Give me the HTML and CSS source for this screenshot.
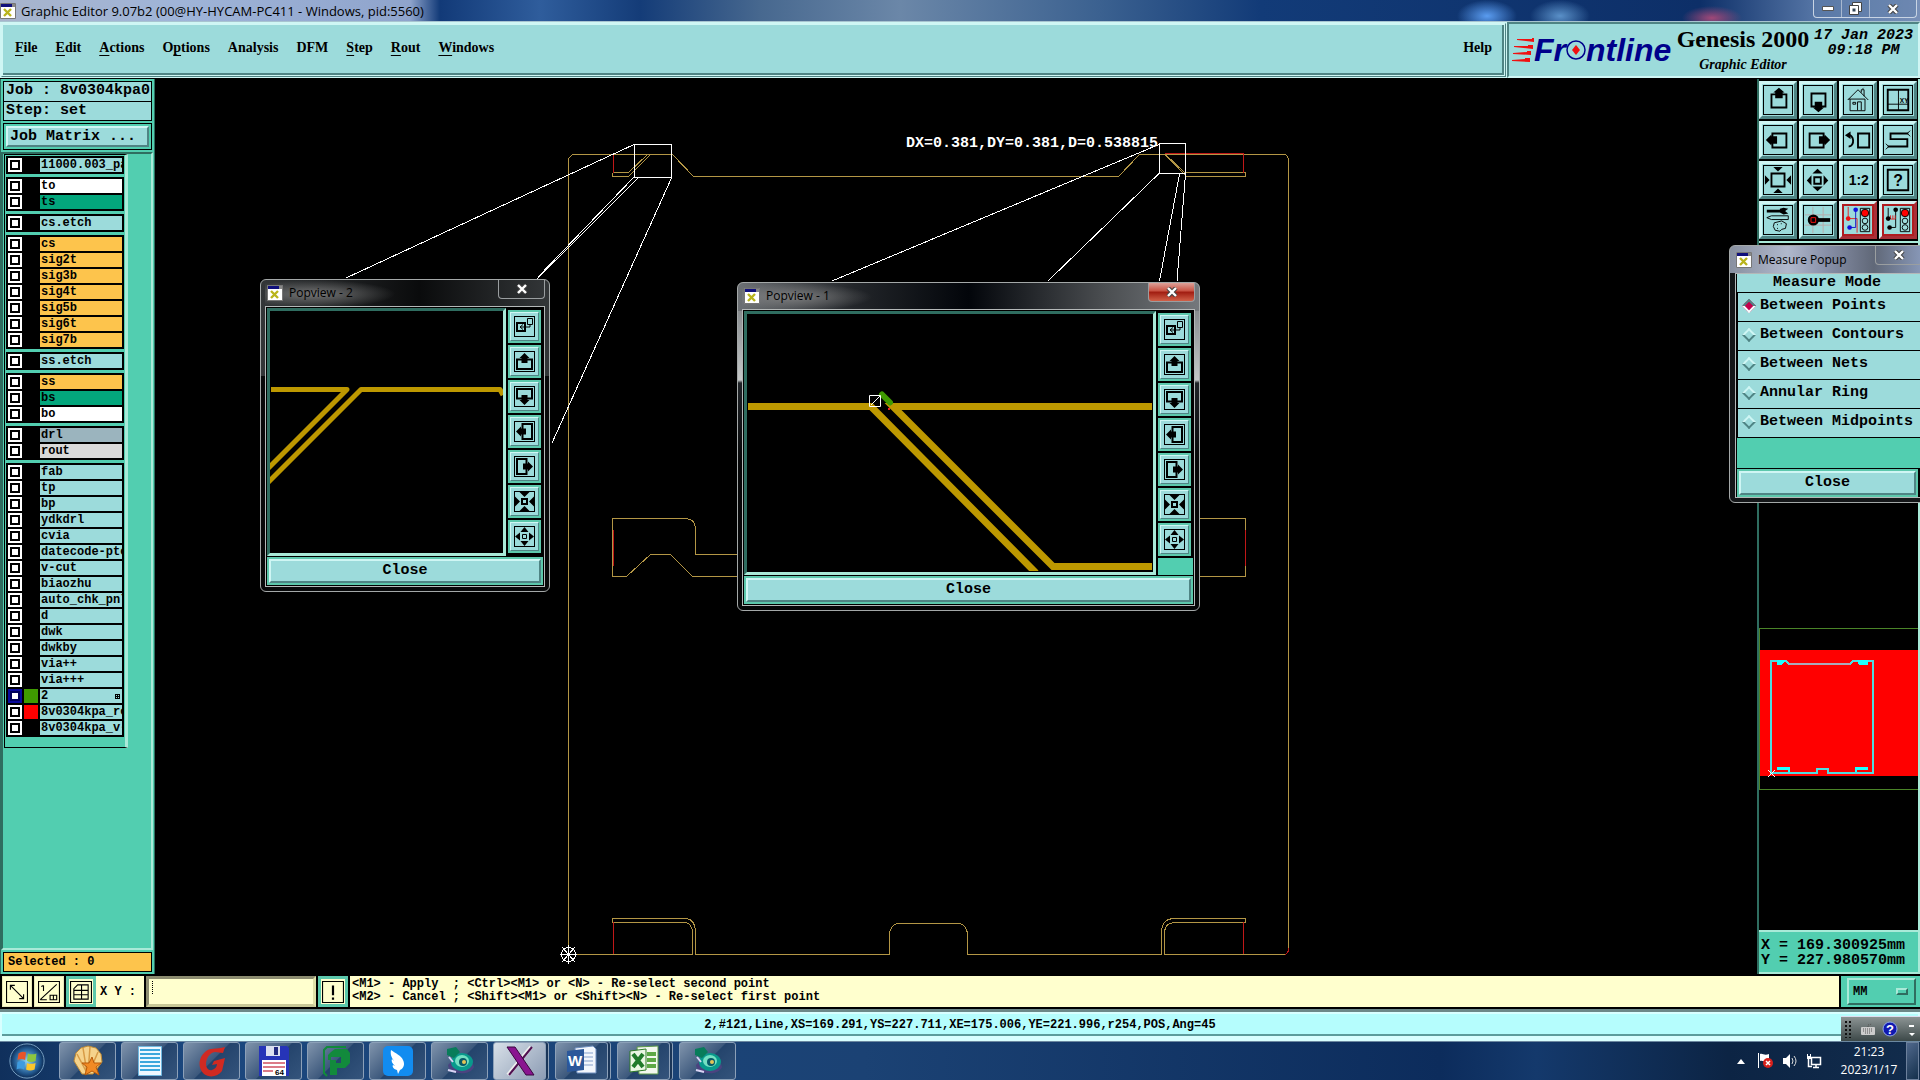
FILE: index.html
```html
<!DOCTYPE html>
<html lang="en">
<head>
<meta charset="utf-8">
<title>Graphic Editor 9.07b2</title>
<link rel="stylesheet" href="styles.css">
</head>
<body>
<svg class="defs" aria-hidden="true">
  <symbol id="xwin" viewBox="0 0 16 16"><path fill="#fff" stroke="#777" d="M.5.5h15v15H.5z"/><path fill="#10107c" d="M1 1h11v3H1z"/><path fill="#888" d="M12 1h3v3h-3z"/><path d="M4 6l7 7M11 6l-7 7" stroke="#b9b41c" stroke-width="2.4"/></symbol>
  <symbol id="xmark" viewBox="0 0 12 10"><path d="M2 1l8 8M10 1L2 9" stroke="#444" stroke-width="4.4"/><path d="M2 1l8 8M10 1L2 9" stroke="#fff" stroke-width="2.4"/></symbol>
  <symbol id="p-link" viewBox="0 0 21 21"><path fill="none" stroke="#000" stroke-width="2" d="M3 7h8v8H3z"/><path fill="none" stroke="#000" d="M13.500 2.500h5v6h-5zM16 8v3H6M9 8.500L6 11l3 2.500"/></symbol>
  <symbol id="p-up" viewBox="0 0 21 21"><path fill="none" stroke="#000" stroke-width="2" d="M3 8.500h15V18H3z"/><path d="M10.500 2l5 5h-2v5h-6V7h-2z"/></symbol>
  <symbol id="p-in" viewBox="0 0 21 21"><path fill="none" stroke="#000" stroke-width="2" d="M8 8h5v5H8z"/><path d="M5.500 1h10l-5 5zM5.500 20h10l-5-5zM1 5.500v10l5-5zM20 5.500v10l-5-5z"/></symbol>
  <symbol id="p-out" viewBox="0 0 21 21"><path fill="none" stroke="#000" d="M8.500 8.500h4v4h-4z"/><path d="M6.500 6h8l-4-5zM6.500 15h8l-4 5zM6 6.500v8l-5-4zM15 6.500v8l5-4z"/></symbol>
  <symbol id="snail" viewBox="0 0 32 32"><path fill="#4b4380" d="M4 20c0 9 22 12 26 2l-3-10-18 3z"/><ellipse cx="18" cy="17" rx="11" ry="9" fill="#08998c"/><ellipse cx="18" cy="16" rx="7" ry="6" fill="#73e0c2"/><circle cx="19" cy="17" r="4" fill="#075a68"/><circle cx="20" cy="17" r="2" fill="#e4c455"/><path fill="#087c5a" d="M3 4l9-2 4 5-6 6-7-3z"/><path d="M5 12l4 5M4 25l8 2" stroke="#d8d4f4" stroke-width="2"/></symbol>
</svg>

<header class="titlebar">
  <svg width="16" height="16"><use href="#xwin"/></svg>
  <span class="title-text">Graphic Editor 9.07b2 (00@HY-HYCAM-PC411 - Windows, pid:5560)</span>
  <div class="win-buttons">
    <button aria-label="Minimize"><svg width="12" height="6"><path fill="#fff" stroke="#555" d="M.5.500h11v4H.5z"/></svg></button>
    <button aria-label="Restore"><svg width="13" height="13"><path fill="#fff" stroke="#444" d="M3.500.500h9v9h-9z"/><path fill="#fff" stroke="#444" d="M.5 3.500h9v9h-9z"/><path fill="#345" d="M3.500 6.500h3v3h-3z"/></svg></button>
    <button aria-label="Close"><svg width="12" height="10"><use href="#xmark"/></svg></button>
  </div>
</header>

<div class="top">
  <nav class="menubar">
    <a href="#"><u>F</u>ile</a><a href="#"><u>E</u>dit</a><a href="#"><u>A</u>ctions</a><a href="#">O<u>p</u>tions</a><a href="#">Analysis</a><a href="#">DFM</a><a href="#"><u>S</u>tep</a><a href="#"><u>R</u>out</a><a href="#"><u>W</u>indows</a><a href="#" class="help">Help</a>
  </nav>
  <div class="brand">
    <div class="logo"><svg class="speed" width="22" height="24"><path fill="#f01010" d="M5 1l15 0v-1l2 0v4l-17-2zM2 8l14 0v-1h5v4l-19-2zM1 15l14-1v-1h4v4L1 16zM0 22l13-1v-1h5v4L0 23z"/></svg>Fr<svg width="20" height="20"><circle cx="10" cy="10" r="9" fill="none" stroke="#00008b" stroke-width="1.500"/><path fill="#f01010" d="M10 5l4 5-4 5-4-5z"/></svg>ntline</div>
    <div class="product"><strong>Genesis 2000</strong><em>Graphic Editor</em></div>
    <div class="date">17 Jan 2023<br>09:18 PM</div>
  </div>
</div>

<main class="work">
  <aside class="side">
    <div class="job"><div>Job : 8v0304kpa0</div><div>Step: set</div></div>
    <div class="matrix"><button>Job Matrix ...</button></div>
    <div class="scroll">
      <div class="layers">
        <div class="group"><label><input type="checkbox"><i></i><span>11000.003_pa</span></label></div>
        <div class="group"><label><input type="checkbox"><i></i><span class="white">to</span></label><label><input type="checkbox"><i></i><span class="green">ts</span></label></div>
        <div class="group"><label><input type="checkbox"><i></i><span>cs.etch</span></label></div>
        <div class="group"><label><input type="checkbox"><i></i><span class="amber">cs</span></label><label><input type="checkbox"><i></i><span class="amber">sig2t</span></label><label><input type="checkbox"><i></i><span class="amber">sig3b</span></label><label><input type="checkbox"><i></i><span class="amber">sig4t</span></label><label><input type="checkbox"><i></i><span class="amber">sig5b</span></label><label><input type="checkbox"><i></i><span class="amber">sig6t</span></label><label><input type="checkbox"><i></i><span class="amber">sig7b</span></label></div>
        <div class="group"><label><input type="checkbox"><i></i><span>ss.etch</span></label></div>
        <div class="group"><label><input type="checkbox"><i></i><span class="amber">ss</span></label><label><input type="checkbox"><i></i><span class="green">bs</span></label><label><input type="checkbox"><i></i><span class="white">bo</span></label></div>
        <div class="group"><label><input type="checkbox"><i></i><span class="slate">drl</span></label><label><input type="checkbox"><i></i><span class="grey">rout</span></label></div>
        <div class="group"><label><input type="checkbox"><i></i><span>fab</span></label><label><input type="checkbox"><i></i><span>tp</span></label><label><input type="checkbox"><i></i><span>bp</span></label><label><input type="checkbox"><i></i><span>ydkdrl</span></label><label><input type="checkbox"><i></i><span>cvia</span></label><label><input type="checkbox"><i></i><span>datecode-pto</span></label><label><input type="checkbox"><i></i><span>v-cut</span></label><label><input type="checkbox"><i></i><span>biaozhu</span></label><label><input type="checkbox"><i></i><span>auto_chk_pnl</span></label><label><input type="checkbox"><i></i><span>d</span></label><label><input type="checkbox"><i></i><span>dwk</span></label><label><input type="checkbox"><i></i><span>dwkby</span></label><label><input type="checkbox"><i></i><span>via++</span></label><label><input type="checkbox"><i></i><span>via+++</span></label><label><input type="checkbox" checked><i class="sw-green"></i><span class="marked">2<svg width="5" height="5" shape-rendering="crispEdges"><path fill="none" stroke="#000" d="M.5.500h4v4h-4zM2.500 0v5M0 2.500h5"/></svg></span></label><label><input type="checkbox"><i class="sw-red"></i><span>8v0304kpa_re</span></label><label><input type="checkbox"><i></i><span>8v0304kpa_v-</span></label></div>
      </div>
    </div>
    <div class="selected">Selected : 0</div>
  </aside>

  <section class="canvas">
    <svg width="1602" height="895" viewBox="155 79 1602 895">
      <g fill="none" stroke="#b39645" shape-rendering="crispEdges">
        <path d="M568.500 954.500V158.500l4-4H672.500l21 22H1118.500l21-22H1284.500q4 1 4 6V948.500q0 5-4 6H1164.500V931.500q1-8 9-9H1245.500V918.500H1172.500q-10 1-11 12V954.500H967.500V933.500q-1-8-8-10H897.500q-7 2-8 10V954.500H695.500V930.500q-1-11-9-12H612.500V922.500H686.500q5 2 6 9V954.500H568.500"/>
        <path d="M613.500 172.500H628.500L647.500 154.500M612.500 172.500V176.500H628.500L650.500 154.500M1165.500 154.500L1184.500 172.500H1245.500V176.500H1186.500L1164.500 154.500"/>
        <path d="M737 554.500H695.500V527.500q-1-8-9-9H612.500V576.500H626.500L650.500 554.500H670.500L692.500 576.500H737M1200 518.500H1245.500V576.500H1200"/>
      </g>
      <g fill="none" stroke="#c01818" shape-rendering="crispEdges"><path d="M613.500 154V173M613.500 922V954M1243.500 922V954M1165 153.500H1243.500V173M1285 954.500q3-1 4-6M613.500 530V566M1245.500 530V566"/></g>
      <g fill="none" stroke="#fff" shape-rendering="crispEdges">
        <path d="M634.500 144.500h37v33h-37zM1159.500 143.500h26v30h-26z"/>
        <path d="M634 144.500L346 278M634 177L538 277M638 178L537 279M671.500 178L552 443M1159 144.500L832 281M1159 173.500L1048 281M1179.500 174L1159.500 281M1185.500 174L1177 281"/>
        <path d="M560 954.500h17M568.500 945v19M562 947l13 15M575 947l-13 15"/><circle cx="568.500" cy="954.500" r="7"/>
      </g>
      <text x="906" y="147">DX=0.381,DY=0.381,D=0.538815</text>
    </svg>
  </section>

  <aside class="right">
    <div class="tools">
      <button aria-label="Pan up"><svg viewBox="0 0 30 30"><path class="b" d="M8 9h16v14H8z"/><path d="M16 2l6 5h-2v6h-8V7h-2z"/></svg></button>
      <button aria-label="Pan down"><svg viewBox="0 0 30 30"><path class="b" d="M8 8h15v14H8z"/><path d="M15.500 28l-6-5h2v-6h8v6h2z"/></svg></button>
      <button aria-label="Home"><svg viewBox="0 0 30 30"><path class="l" d="M4 15L15 4l11 11M6.500 14v12.500h16V14H5M18.500 7V4h3v7M9.500 17.500h3v2h-3zM14.500 26v-9h4v9M20 3l1-1"/></svg></button>
      <button aria-label="Grid position"><svg viewBox="0 0 30 30"><path class="b" d="M4 4h22v22H4z"/><path class="l" d="M15.500 4v22M4 19.500h22"/><text x="17" y="18" font-size="7">XY</text></svg></button>
      <button aria-label="Pan left"><svg viewBox="0 0 30 30"><path class="b" d="M9 8h15v15H9z"/><path d="M2 15l6-6v2h6v8H8v2z"/></svg></button>
      <button aria-label="Pan right"><svg viewBox="0 0 30 30"><path class="b" d="M6 8h15v15H6z"/><path d="M28 15l-6-6v2h-6v8h6v2z"/></svg></button>
      <button aria-label="Previous view"><svg viewBox="0 0 30 30"><path class="b" d="M15 8h12v15H15z"/><path class="b" d="M4 10c7-2 8 12 1 12" stroke-width="3"/><path d="M1 10l6-4v8z"/></svg></button>
      <button aria-label="Serpentine"><svg viewBox="0 0 30 30"><path class="b" d="M26 8H7v6h18v8H4"/><path class="l" d="M25 8l3-3M25 8l3 3M5 22l-3-3M5 22l-3 3"/></svg></button>
      <button aria-label="Zoom out"><svg viewBox="0 0 30 30"><path class="b" d="M8 8h14v14H8z"/><path d="M10 1h10l-5 5zM10 29h10l-5-5zM1 10v10l5-5zM29 10v10l-5-5z"/></svg></button>
      <button aria-label="Zoom in"><svg viewBox="0 0 30 30"><path class="b" d="M11 12h7v7h-7z"/><path d="M9 8h11l-5.500-5zM9 22h11l-5.500 5zM8 10v11l-5-5.500zM21 10v11l5-5.500z"/></svg></button>
      <button aria-label="Scale"><svg viewBox="0 0 30 30"><text x="5" y="20" font-size="15">1:2</text></svg></button>
      <button aria-label="Query"><svg viewBox="0 0 30 30"><path class="b" d="M4 4h22v22H4z"/><text x="10" y="21" font-size="17">?</text></svg></button>
      <button aria-label="Tools"><svg viewBox="0 0 30 30"><path d="M3 4h15v3H3zM17 3l4-1 5 1-3 2v1l3 2-5 1-4-2z"/><path class="l" d="M3 12.500l5-2h18v4H8zM11 18l8-2 5 3-1 5-4 1-2 2-5-1-2-4zM14 20h1M18 19h1M14 24h1"/></svg></button>
      <button aria-label="Snap"><svg viewBox="0 0 30 30"><path d="M9.500 1v28M20.500 1v28M1 9.500h28M1 20.500h28" stroke="#b9aaaa" fill="none"/><path d="M15 13h13v4H15z"/><circle cx="10" cy="15" r="6"/><path d="M7.500 12.500h5v5h-5z" fill="none" stroke="#f11"/></svg></button>
      <button class="alert" aria-label="Online check"><svg viewBox="0 0 30 30"><path d="M4.500 1v12M4 13.500h10v15" stroke="#d22" fill="none"/><path d="M12.500 4v19H6" stroke="#11c" fill="none"/><circle cx="4.500" cy="13.500" r="2.500" fill="#e11"/><circle cx="12.500" cy="4" r="2.500" fill="#11d"/><circle cx="6" cy="23" r="2.500" fill="#11d"/><path class="l" d="M17.500 2.500h10v25h-10z"/><circle cx="22.500" cy="7.500" r="4" fill="#f00" stroke="#000"/><circle class="l" cx="22.500" cy="16" r="3"/><circle class="l" cx="22.500" cy="23" r="3"/></svg></button>
      <button class="alert" aria-label="Spacing check"><svg viewBox="0 0 30 30"><path class="l" d="M4.500 2v12M12.500 4v19H6"/><path d="M7 10v4h5v-4M9.500 10v4" stroke="#d22" fill="none"/><circle cx="4.500" cy="13.500" r="2.500"/><circle cx="12.500" cy="4" r="2.500"/><circle cx="6" cy="23" r="2.500"/><path class="l" d="M17.500 2.500h10v25h-10z"/><circle cx="22.500" cy="7.500" r="4" fill="#f00" stroke="#000"/><circle class="l" cx="22.500" cy="16" r="3"/><circle class="l" cx="22.500" cy="23" r="3"/></svg></button>
    </div>
    <div class="overview">
      <svg width="159" height="686" viewBox="1759 243 159 686" shape-rendering="crispEdges">
        <path fill="#f00" d="M1758 650h161v126h-161z"/>
        <path d="M1759.500 789.500V628.500H1920M1759 789.500h160" fill="none" stroke="#4a8428"/>
        <path d="M1771 773V661h15l3 3h61l3-3h20v112h-45v-4h-11v4z" fill="none" stroke="#4fdce0" stroke-width="2"/>
        <path d="M1789 663h61v2h-61z" fill="#aab"/>
        <path d="M1777 660h9l-4 5h-5zM1857 660h11v5h-9zM1777 767h13v5h-2v-2h-11zM1868 767h-13v5h2v-2h11z" fill="#1fffff"/>
        <path d="M1768 770l7 7M1775 770l-7 7" stroke="#fff"/>
      </svg>
    </div>
    <div class="coords">X = 169.300925mm<br>Y = 227.980570mm</div>
  </aside>

  <section class="window pop2">
    <header><svg width="16" height="16"><use href="#xwin"/></svg><span>Popview - 2</span><button aria-label="Close window"><svg width="12" height="10"><use href="#xmark"/></svg></button></header>
    <div class="win-body">
      <div class="view"><svg width="234" height="242" viewBox="270 311 234 242"><g fill="none" stroke="#bd9800" stroke-width="5" stroke-linejoin="round"><path d="M271 389.500H347L268 468.500M503 395L500 389.500H361L268 482.500"/></g></svg></div>
      <div class="pop-tools">
        <button aria-label="Link"><svg><use href="#p-link"/></svg></button><button aria-label="Up"><svg><use href="#p-up"/></svg></button><button aria-label="Down"><svg class="r180"><use href="#p-up"/></svg></button><button aria-label="Left"><svg class="r270"><use href="#p-up"/></svg></button><button aria-label="Right"><svg class="r90"><use href="#p-up"/></svg></button><button aria-label="Out"><svg><use href="#p-in"/></svg></button><button aria-label="In"><svg><use href="#p-out"/></svg></button>
      </div>
      <div class="close-row"><button>Close</button></div>
    </div>
  </section>

  <section class="window pop1">
    <header><svg width="16" height="16"><use href="#xwin"/></svg><span>Popview - 1</span><button aria-label="Close window"><svg width="12" height="10"><use href="#xmark"/></svg></button></header>
    <div class="win-body">
      <div class="view"><svg width="405" height="257" viewBox="747 314 405 257"><g fill="none" stroke="#bd9800" stroke-width="7"><path d="M748 406.500H871L1036 573"/><path d="M1152 406.500H893L1053 566.500H1152"/></g><path d="M882 394.500l8 8" stroke="#3f9a00" stroke-width="6" stroke-linecap="round"/><path d="M869.500 395.500h11v11h-11zM871 405l9-9" fill="none" stroke="#fff"/><path d="M888 408h2v2h-2z" fill="#e22"/></svg></div>
      <div class="pop-tools">
        <button aria-label="Link"><svg><use href="#p-link"/></svg></button><button aria-label="Up"><svg><use href="#p-up"/></svg></button><button aria-label="Down"><svg class="r180"><use href="#p-up"/></svg></button><button aria-label="Left"><svg class="r270"><use href="#p-up"/></svg></button><button aria-label="Right"><svg class="r90"><use href="#p-up"/></svg></button><button aria-label="Out"><svg><use href="#p-in"/></svg></button><button aria-label="In"><svg><use href="#p-out"/></svg></button><span class="fill"></span>
      </div>
      <div class="close-row"><button>Close</button></div>
    </div>
  </section>

  <section class="window measure">
    <header><svg width="16" height="16"><use href="#xwin"/></svg><span>Measure Popup</span><button aria-label="Close window"><svg width="12" height="10"><use href="#xmark"/></svg></button></header>
    <div class="measure-body">
      <h2>Measure Mode</h2>
      <label><input type="radio" name="mode" checked>Between Points</label>
      <label><input type="radio" name="mode">Between Contours</label>
      <label><input type="radio" name="mode">Between Nets</label>
      <label><input type="radio" name="mode">Annular Ring</label>
      <label><input type="radio" name="mode">Between Midpoints</label>
      <div class="spacer"></div>
      <div class="close-row"><button>Close</button></div>
    </div>
  </section>
</main>

<div class="command">
  <button class="mode" aria-label="Diagonal"><svg viewBox="0 0 20 20"><path class="l" d="M.5.500h19v19H.5zM4 4l12 12M4 8V4h4M16 12v4h-4"/></svg></button>
  <button class="mode" aria-label="Angle"><svg viewBox="0 0 20 20"><path class="l" d="M.5.500h19v19H.5zM2 17L17 3M2 17h6M5 4v5M3 5l2-1M11 13h6v4h-6zM14 13v4"/></svg></button>
  <button class="mode framed" aria-label="Grid"><svg viewBox="0 0 20 20"><path class="l" d="M.5.500h19v19H.5zM7 3.500h9.500v13h-13V7zM3 8.500h13M10.500 4v13M3 12.500h13"/></svg></button>
  <label class="xy-label" for="xy">X Y :</label>
  <input id="xy" class="xy" type="text">
  <button class="mode framed" aria-label="Execute"><svg viewBox="0 0 20 20"><path class="l" d="M.5.500h19v19H.5z"/><path d="M9 4h2v9H9zM9 15h2v2H9z"/></svg></button>
  <pre class="hint">&lt;M1&gt; - Apply  ; &lt;Ctrl&gt;&lt;M1&gt; or &lt;N&gt; - Re-select second point
&lt;M2&gt; - Cancel ; &lt;Shift&gt;&lt;M1&gt; or &lt;Shift&gt;&lt;N&gt; - Re-select first point</pre>
  <div class="units"><button>MM<i></i></button></div>
</div>

<div class="status">
  <div class="status-text">2,#121,Line,XS=169.291,YS=227.711,XE=175.006,YE=221.996,r254,POS,Ang=45</div>
  <div class="langbar"><svg width="78" height="24"><g stroke="#111" stroke-width="2" stroke-dasharray="2 2"><path d="M5 4v17M9 4v17"/></g><rect x="20" y="10" width="14" height="8" rx="1" fill="#ccc"/><path d="M22 12h10M22 14h10M24 16h6M27 10V8l4-1" stroke="#555" stroke-dasharray="1 1" fill="none"/><circle cx="49" cy="12" r="7" fill="#1018b0" stroke="#8fa6e8"/><text x="45" y="17" fill="#fff" font-size="13">?</text><path fill="#fff" d="M68 8h5v2h-5zM68 16h6l-3 3z"/></svg></div>
</div>

<footer class="taskbar">
  <button class="start" aria-label="Start"><svg width="40" height="40" viewBox="0 0 40 40"><defs><radialGradient id="orb"><stop offset="0" stop-color="#8fd4f4"/><stop offset=".7" stop-color="#265f96"/><stop offset="1" stop-color="#0b2a54"/></radialGradient></defs><circle cx="20" cy="20" r="18" fill="url(#orb)" stroke="#7da7c8"/><path fill="#e8552a" d="M11 12q4-3 8-1l-1 8q-4-2-8 0z"/><path fill="#8cc63f" d="M21 12q4 2 9 0l-1 8q-5 2-9 0z"/><path fill="#3d9be0" d="M10 21q4-2 8 0l-1 8q-4-2-8 0z"/><path fill="#fbc62c" d="M20 22q4 2 9 0l-1 7q-5 2-9 0z"/></svg></button>
  <button aria-label="Shell"><svg viewBox="0 0 32 32"><path fill="#f5d38c" stroke="#c08b35" d="M10 29L2 16 4 8l5-5 7-2 8 2 5 6 1 8-9 12z"/><path d="M15 28L5 9M15 28L11 3M16 28L18 2M17 28l9-21" stroke="#d79b45" stroke-width="1.500"/><path fill="#f18a24" stroke="#b85a0a" d="M20 12l2 6 7 0-5 4 3 8-7-4-7 4 2-8-5-4h7z"/></svg></button>
  <button aria-label="Notes"><svg viewBox="0 0 32 32"><path fill="#eef8ff" stroke="#6fb8e0" d="M4.500 1.500h23v29h-23z"/><path d="M6 5h20M6 9h20M6 13h20M6 17h20M6 21h20M6 25h20" stroke="#3da7dc" stroke-width="2"/></svg></button>
  <button aria-label="G tool"><svg viewBox="0 0 32 32"><path fill="#d02a22" d="M29 2l-2 6-8-1c-6 1-9 7-9 12 0 4 3 7 6 6 3-1 5-3 5-6l-5 1 2-4 11-3-3 13c-4 6-13 7-18 3C1 23 3 12 9 7c5-5 11-2 20-5z"/></svg></button>
  <button aria-label="Floppy"><svg viewBox="0 0 32 32"><path fill="#2634b8" d="M1 1h28l2 2v28H1z"/><path fill="#dce0f0" d="M8 1h14v10H8z"/><path fill="#222a80" d="M16 2h4v8h-4z"/><path fill="#fff" d="M4 15h24v16H4z"/><path d="M5 18h22M5 22h22M5 26h10" stroke="#d05060" stroke-width="1.500"/><path fill="#fff" d="M15 23h13v7H15z"/><text x="17" y="30" font-size="8">64</text></svg></button>
  <button aria-label="P tool"><svg viewBox="0 0 32 32"><path fill="#128a3c" d="M11 7l4-3h12l3 4v10l-5 5h-8v7h-7V15h6v3h5v-6H11v3H8v-5z"/><path d="M4 16V5l3-3h19M4 16v12l3 3" stroke="#128a3c" stroke-width="2" fill="none"/></svg></button>
  <button aria-label="Bird"><svg viewBox="0 0 32 32"><rect x="1" y="1" width="30" height="30" rx="5" fill="#128cf0"/><path fill="#fff" d="M9 5c5 4 10 5 12 10 2 4 1 8-3 10l-2 4-1-4c-4-1-5-4-4-5l2 1c-3-3-4-5-3-7l2 2c-2-3-4-6-3-11z"/></svg></button>
  <button aria-label="Genesis"><svg viewBox="0 0 32 32"><use href="#snail"/></svg></button>
  <button class="active stacked" aria-label="X server"><svg viewBox="0 0 32 32"><path d="M27 2L4 30" stroke="#eee" stroke-width="4"/><path d="M28 2L5 30" stroke="#501050" stroke-width="2"/><path fill="#8a1590" stroke="#3a063e" d="M3 2h8l19 28h-8z"/></svg></button>
  <button class="stacked" aria-label="Word"><svg viewBox="0 0 32 32"><path fill="#f2f6fc" stroke="#6f8fc0" d="M9 3l18-2 3 3v24H11z"/><path d="M18 8h9M18 12h9M18 16h9M18 20h9" stroke="#85a0cc"/><path fill="#2b579a" d="M1 6l17-2v21L1 27z"/><text x="2" y="21" font-size="15" fill="#fff">W</text></svg></button>
  <button class="stacked" aria-label="Excel"><svg viewBox="0 0 32 32"><path fill="#f2f8ee" stroke="#5d9a48" d="M9 2l21-1v28H11z"/><path fill="#5da845" d="M19 7h9v4h-9zM19 13h9v4h-9zM19 19h9v4h-9z"/><path fill="#e9f6e2" stroke="#2f7a28" d="M2 6l16-2v21L2 27z"/><path d="M5 9l10 13M15 9L5 22" stroke="#207a2a" stroke-width="4"/></svg></button>
  <button aria-label="Genesis session"><svg viewBox="0 0 32 32"><use href="#snail"/></svg></button>
  <div class="tray">
    <svg width="8" height="5"><path fill="#fff" d="M0 5h8L4 0z"/></svg>
    <svg width="17" height="18"><path fill="#fff" d="M1 1h1v15H1zM3 2c3-1 4 2 9 0v7c-4 2-6-1-9 0z"/><circle cx="11" cy="11" r="5" fill="#d8211c"/><path d="M9 9l4 4M13 9l-4 4" stroke="#fff" stroke-width="1.500"/></svg>
    <svg width="16" height="16"><path fill="#fff" d="M1 5h3l4-4v14l-4-4H1z"/><path d="M10 5q2 3 0 6M12 3q4 5 0 10" fill="none" stroke="#ddd"/></svg>
    <svg width="16" height="16"><path d="M5.500 4.500h9v7h-9zM7 14.500h6M10 12v2M2.500 6v7.500H6" fill="none" stroke="#fff" stroke-width="1.500"/><path fill="#fff" d="M1 3h4v3H1zM1 1h1v2H1zM4 1h1v2H4z"/></svg>
    <div class="clock">21:23<br>2023/1/17</div>
    <button class="desktop" aria-label="Show desktop"></button>
  </div>
</footer>
</body>
</html>
```
FILE: styles.css
```css
:root {
  --aqua: #9cdbdb;
  --aqua-hi: #cff6f4;
  --aqua-lo: #4f8484;
  --teal: #52ceb0;
  --teal-hi: #a9ead8;
  --teal-lo: #2f6d60;
  --cream: #ffffce;
}

* { box-sizing: border-box; }

body {
  margin: 0;
  min-height: 100vh;
  display: flex;
  flex-direction: column;
  background: #000;
  color: #000;
  font: bold 15px/18px "Liberation Mono", monospace;
  overflow: hidden;
}

button, input { font: inherit; color: inherit; padding: 0; margin: 0; border: 0; border-radius: 0; background: none; }
svg { display: block; flex: none; }
.defs { position: absolute; width: 0; height: 0; }
.l { fill: none; stroke: #000; }
.b { fill: none; stroke: #000; stroke-width: 2; }

/* Title bar */
.titlebar {
  height: 22px;
  display: flex;
  align-items: center;
  gap: 5px;
  font: 13px/20px "Open Sans", sans-serif;
  border-bottom: 1px solid #a8c4d0;
  background:
    radial-gradient(ellipse 30px 16px at 1487px 16px, #5a9cf0, transparent),
    radial-gradient(ellipse 30px 16px at 1560px 16px, #5a90c8, transparent),
    radial-gradient(ellipse 30px 12px at 1712px 18px, #a04878, transparent),
    linear-gradient(90deg, #a8b4cc 0, #9fb4d8 180px, #8fa4cc 410px, #123a78 440px, #2f5d9c 540px, #143c78 640px, #47688f 760px, #6b87a8 900px, #3b6190 1100px, #123b78 1260px, #0d2f68 1700px, #5878a8 1820px, #7890b8 100%);
}
.titlebar .title-text { flex: 1; }
.win-buttons { display: flex; align-self: flex-start; margin-right: 3px; border: 1px solid #c8d4e4; border-top: 0; border-radius: 0 0 4px 4px; background: #5f7da866; }
.win-buttons button { width: 28px; height: 17px; display: grid; place-items: center; border-right: 1px solid #a8b8d0; }
.win-buttons button:last-child { width: 46px; border-right: 0; }

/* Menu row */
.top { height: 57px; display: flex; border-bottom: 1px solid #000; background: var(--aqua); }
.menubar {
  flex: 1;
  display: flex;
  align-items: center;
  gap: 18px;
  padding: 0 13px 4px 13px;
  font: bold 14px/20px "Liberation Serif", serif;
  border: 2px solid;
  border-color: var(--aqua-hi) var(--aqua-lo) var(--aqua-lo) var(--aqua-hi);
  outline: 1px solid var(--aqua-hi);
  outline-offset: -1px;
  box-shadow: inset 0 0 0 1px var(--aqua-hi), inset -2px -2px 0 1px var(--aqua-lo);
}
.menubar a { color: #000; text-decoration: none; }
.menubar u { text-underline-offset: 3px; text-decoration-thickness: 1px; }
.menubar .help { margin-left: auto; }
.brand {
  width: 413px;
  display: flex;
  padding: 0 2px 0 3px;
  border: 2px solid;
  border-color: var(--aqua-lo) var(--aqua-hi) var(--aqua-hi) var(--aqua-lo);
}
.logo { display: flex; align-items: center; width: 163px; height: 50px; padding-top: 2px; color: #00008b; font: italic bold 32px/36px "Liberation Sans", sans-serif; }
.product { width: 136px; display: flex; flex-direction: column; align-items: center; font-family: "Liberation Serif", serif; }
.product strong { font-size: 24px; line-height: 31px; white-space: nowrap; }
.product em { font-size: 14px; line-height: 20px; }
.date { flex: 1; padding-top: 4px; font-style: italic; line-height: 15px; text-align: center; white-space: nowrap; }

/* Work area */
.work { flex: 1; display: flex; position: relative; min-height: 0; }
.side { width: 155px; padding: 2px; display: flex; flex-direction: column; background: var(--teal); border-right: 1px solid var(--teal-lo); border-left: 1px solid var(--teal-lo); }
.job { border: 1px solid #000; background: var(--aqua); }
.job div { height: 19px; padding-left: 2px; white-space: nowrap; overflow: hidden; }
.job div + div { border-top: 1px solid #000; }
.matrix { margin-top: 2px; padding: 2px; border: 1px solid #000; }
.matrix button { display: block; width: 100%; height: 21px; padding-left: 2px; text-align: left; background: var(--aqua); border: 2px solid; border-color: var(--aqua-hi) var(--aqua-lo) var(--aqua-lo) var(--aqua-hi); line-height: 16px; }
.scroll { flex: 1; margin: 2px -1px 0 -2px; padding-left: 1px; border: 2px solid; border-color: var(--teal-lo) var(--teal-hi) var(--teal-hi) var(--teal-lo); }
.layers { width: 124px; padding: 1px 2px 10px 1px; display: grid; gap: 3px; border: 1px solid #000; border-right: 3px solid var(--teal-hi); font-size: 12px; line-height: 14px; }
.group { width: 118px; padding: 2px 2px 0; background: #000; }
.group label { display: grid; grid-template-columns: 14px 14px 1fr; gap: 2px; height: 16px; }
.group input { appearance: none; width: 14px; height: 14px; background: #fff; border: 2px solid #fff; box-shadow: inset 0 0 0 2px #000; }
.group input:checked { border-color: #0a0a9c; box-shadow: inset 0 0 0 2px #00005c; }
.group i { height: 14px; }
.group span { height: 14px; padding-left: 1px; background: var(--aqua); white-space: nowrap; overflow: hidden; }
.group .white { background: #fff; }
.group .green { background: #03a67c; }
.group .amber { background: #fdc44c; }
.group .slate { background: #9bb4be; }
.group .grey { background: #d9d9d9; }
.group .marked { display: flex; justify-content: space-between; align-items: center; padding-right: 2px; }
.sw-green { background: #3f9a00; }
.sw-red { background: #f00; }
.selected { margin-top: 2px; height: 20px; padding-left: 4px; border: 1px solid #000; background: #fdc44c; font-size: 12px; }

.canvas { flex: 1; min-width: 0; overflow: hidden; }
.canvas text { fill: #fff; font: bold 15px "Liberation Mono", monospace; }

.right { width: 163px; display: flex; flex-direction: column; border-left: 2px solid var(--teal-lo); border-right: 2px solid var(--teal-hi); }
.tools { display: grid; grid-template-columns: repeat(4, 38px); gap: 2px; padding: 2px 0 2px; border-bottom: 2px solid var(--teal-hi); }
.tools button { width: 38px; height: 38px; padding: 1px; background: var(--aqua); border: 3px solid; border-color: var(--aqua-hi) var(--aqua-lo) var(--aqua-lo) var(--aqua-hi); }
.tools svg { width: 30px; height: 30px; border: 1px solid #000; }
.tools text, .langbar text, .taskbar text { font-family: "Liberation Sans", sans-serif; font-weight: bold; }
.tools .alert { border-color: #d8f0f0 #a83038 #a83038 #d8f0f0; padding: 0; }
.tools .alert svg { width: 32px; height: 32px; border: 2px solid #b01c20; }
.overview { flex: 1; overflow: hidden; }
.coords { height: 44px; padding: 6px 0 0 2px; line-height: 15px; background: var(--teal); border-top: 2px solid var(--teal-hi); border-bottom: 2px solid var(--teal-hi); white-space: nowrap; }

/* Floating windows */
.window { position: absolute; border: 1px solid #a4a8a8; border-radius: 6px; padding: 0 4px 4px; background: linear-gradient(90deg, #333638, #0a0b0c 55%, #333638) 0 0 / 100% 96px no-repeat, #08090a; }
.window header { height: 26px; display: flex; align-items: center; gap: 6px; padding-left: 2px; font: 12px/26px "Open Sans", sans-serif; }
.window header span { flex: 1; }
.window header button { align-self: flex-start; width: 47px; height: 19px; display: grid; place-items: center; border: 1px solid #9a9ea0; border-top: 0; border-radius: 0 0 4px 4px; }
.win-body { display: grid; grid-template-columns: 1fr 35px; column-gap: 2px; padding: 1px; border: 1px solid #b4b8b8; background: #000; }
.view { border: 3px solid; border-color: var(--teal-lo) var(--teal-hi) var(--teal-hi) var(--teal-lo); overflow: hidden; }
.pop-tools { display: flex; flex-direction: column; gap: 2px; padding-top: 2px; }
.pop-tools button { width: 33px; height: 33px; padding: 1px; border: 3px solid; border-color: var(--aqua-hi) var(--aqua-lo) var(--aqua-lo) var(--aqua-hi); background: var(--aqua); outline: 2px solid #5cc8ac; outline-offset: -2px; }
.pop-tools button svg { width: 21px; height: 21px; margin: 2px; outline: 1px solid #000; outline-offset: -1px; }
.r90 { transform: rotate(90deg); }
.r180 { transform: rotate(180deg); }
.r270 { transform: rotate(270deg); }
.fill { flex: 1; background: var(--teal); }
.close-row { grid-column: 1 / -1; margin-top: 1px; padding: 2px; background: #5cc8ac; }
.close-row button { display: block; width: 100%; height: 24px; line-height: 20px; background: var(--aqua); border: 2px solid; border-color: var(--aqua-hi) var(--aqua-lo) var(--aqua-lo) var(--aqua-hi); }
.pop2 { left: 260px; top: 200px; width: 290px; }
.pop2 .view { height: 248px; }
.pop2 header, .pop1 header { background: radial-gradient(ellipse 80px 14px at 50px 14px, #888c, transparent); }
.pop1 { left: 737px; top: 203px; width: 463px; background: linear-gradient(90deg, #6c7074, #23262a 25%, #02050a 50%, #4c4f52 80%, #74787c) 0 0 / 100% 28px no-repeat, linear-gradient(#707478, #c4c8c8 97px, #202428 100px, #060708 180px); }
.pop1 .view { height: 264px; }
.pop1 header button { background: linear-gradient(#dca098, #c85040 45%, #a01c10 50%, #d06048); }
.measure { right: -3px; top: 166px; width: 194px; padding: 0 0 4px 5px; border-radius: 6px 0 0 6px; background: linear-gradient(90deg, #8890a0, #b0b8cc 30%, #8890a8 50%, #606878 75%, #8898b8) 0 0 / 100% 27px no-repeat, #141618; }
.measure header { height: 27px; padding-left: 1px; }
.measure-body { border: 1px solid #b4b8b8; background: #000; padding-left: 1px; }
.measure h2 { margin: 0; padding: 1px 4px 0 0; height: 18px; line-height: 16px; font-size: 15px; text-align: center; background: var(--aqua); }
.measure label { display: flex; align-items: center; gap: 6px; height: 28px; margin: 1px 1px 0 1px; padding: 0 0 2px 6px; background: var(--aqua); white-space: nowrap; }
.measure input { appearance: none; width: 10px; height: 10px; transform: rotate(45deg); border: 2px solid; border-color: var(--aqua-hi) var(--aqua-lo) var(--aqua-lo) var(--aqua-hi); }
.measure input:checked { background: #c4004c; border-color: var(--aqua-lo) #f4ffff #f4ffff var(--aqua-lo); }
.spacer { height: 30px; background: var(--teal); margin-top: 1px; }
.measure .close-row { margin-right: 3px; }

/* Command line */
.command { height: 35px; display: flex; gap: 2px; padding: 2px 0 2px 2px; background: #000; font-size: 12px; }
.mode { width: 30px; display: grid; place-items: center; background: var(--cream); border: 1px solid #e8e8b8; }
.mode svg { width: 22px; height: 22px; }
.mode.framed { border: 3px solid #5cc8ac; }
.xy-label { width: 48px; margin-left: -2px; padding-left: 4px; line-height: 32px; background: var(--cream); }
.xy { width: 170px; background: repeating-linear-gradient(#000 0 1px, #0000 1px 2px) 3px 2px / 1px 14px no-repeat, var(--cream); border: 3px solid; border-color: #8c8c70 #e0e0a8 #c8c898 #8c8c70; padding-left: 4px; }
.hint { flex: 1; margin: 0; padding: 2px; background: var(--cream); font: bold 12px/13px "Liberation Mono", monospace; overflow: hidden; }
.units { width: 79px; padding: 2px 4px 2px 6px; background: var(--teal); }
.units button { width: 100%; height: 27px; display: flex; align-items: center; justify-content: space-between; padding: 0 6px 0 4px; border: 2px solid; border-color: var(--teal-hi) var(--teal-lo) var(--teal-lo) var(--teal-hi); }
.units i { width: 12px; height: 7px; border: 2px solid; border-color: var(--teal-hi) var(--teal-lo) var(--teal-lo) var(--teal-hi); }

.status { height: 32px; position: relative; border-top: 3px solid #6c8888; background: #d8ffff; padding: 2px 2px 5px; }
.status-text { height: 22px; font-size: 12px; line-height: 22px; text-align: center; background: #b5fdfd; border-bottom: 2px solid #5c9c9c; }
.langbar { position: absolute; right: 0; bottom: 0; width: 79px; height: 25px; background: linear-gradient(#8c9494, #3c4848); border-top: 1px solid #dde; }

/* Taskbar */
.taskbar { height: 39px; display: flex; gap: 5px; background: linear-gradient(90deg, #10305c, #1b477e 10%, #1b4274 45%, #0c2c5c 75%, #14396c 80%, #0c2444 90%, #122c4c); border-top: 1px solid #6c88a0; }
.taskbar > button { width: 57px; height: 38px; display: grid; place-items: center; border: 1px solid #8ca0b8; border-radius: 3px; background: linear-gradient(135deg, #8094ac, #3c587c 50%, #24446c 51%, #34547c); }
.taskbar > button svg { width: 32px; height: 32px; }
.taskbar > .start { width: 54px; border: 0; background: none; }
.taskbar > .start svg { width: 38px; height: 38px; }
.taskbar > .active { background: linear-gradient(135deg, #d8e0e8, #8c9cb4); }
.taskbar > .stacked { width: 53px; margin-right: 4px; box-shadow: 2px 0 0 #1a3558, 3px 0 0 #8ca0b8; }
.tray { margin-left: auto; display: flex; align-items: center; gap: 8px; }
.tray > svg:first-child { margin-right: 4px; }
.clock { width: 74px; margin-left: 2px; color: #fff; font: 12px/18px "Open Sans", sans-serif; text-align: center; }
.desktop { width: 13px; height: 38px; margin: 0 1px 0 -8px; border: 1px solid #6c809c; background: linear-gradient(135deg, #50688c, #14304c); }
```
